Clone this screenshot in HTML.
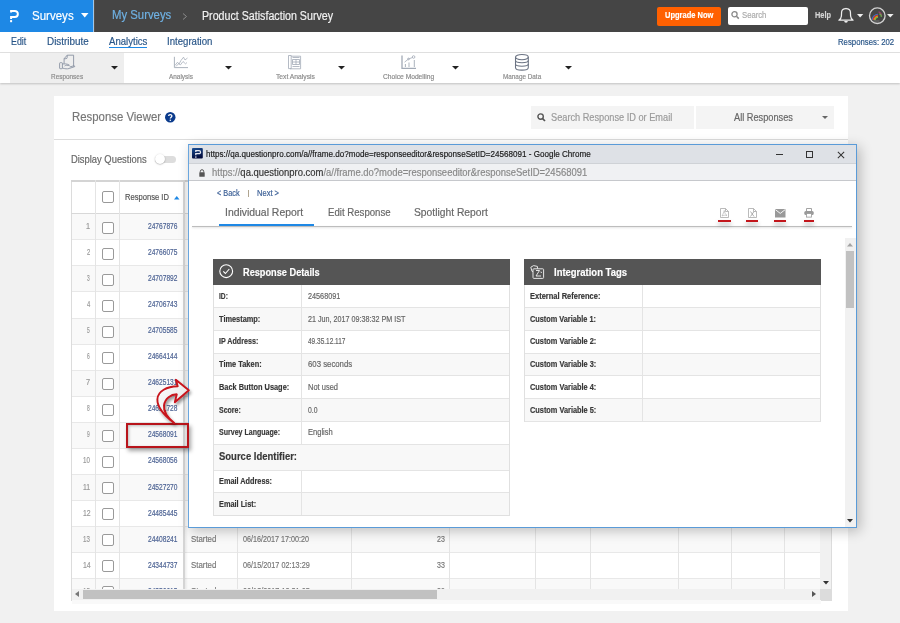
<!DOCTYPE html>
<html><head><meta charset="utf-8">
<style>
*{box-sizing:border-box;margin:0;padding:0}
html,body{width:900px;height:623px;overflow:hidden;background:#f1f1f1;font-family:"Liberation Sans",sans-serif}
.a{position:absolute;white-space:nowrap}
.t{position:absolute;white-space:nowrap;transform-origin:0 0;-webkit-text-stroke:0.18px currentColor}
svg{position:absolute;overflow:visible}
</style></head><body>
<div class="a" style="left:0px;top:0px;width:900px;height:32px;background:#454545"></div>
<div class="a" style="left:0px;top:0px;width:93px;height:32px;background:#1e88e5"></div>
<div class="a" style="left:93px;top:0px;width:1px;height:32px;background:#9cc8ef"></div>
<div class="a" style="left:94px;top:0px;width:1px;height:32px;background:#5a5048"></div>
<svg style="left:9px;top:9px" width="11" height="14" viewBox="0 0 11 14"><path d="M2.1 3.4 V1.9 H5.8 A3.05 3.05 0 0 1 5.8 8 H2.1 V10" fill="none" stroke="#fff" stroke-width="2"/><rect x="1.1" y="11.1" width="2" height="2.1" fill="#fff"/></svg>
<div class="t" id="t0" style="left:32.43px;top:8.18px;font-size:13.5px;line-height:15.079px;color:#fff;font-weight:normal;transform:scaleX(0.8542);">Surveys</div>
<svg style="left:80.8px;top:13px" width="8" height="5"><path d="M0 0H7.5L3.75 4.5Z" fill="#fff"/></svg>
<div class="t" id="t1" style="left:111.77px;top:8.99px;font-size:12.5px;line-height:13.963px;color:#6fb1e3;font-weight:normal;transform:scaleX(0.9077);">My Surveys</div>
<svg style="left:182px;top:13px" width="6" height="7"><path d="M1 0.5L4.5 3.5L1 6.5" fill="none" stroke="#8a8a8a" stroke-width="1"/></svg>
<div class="t" id="t2" style="left:202.47px;top:9.54px;font-size:12px;line-height:13.404px;color:#f2f2f2;font-weight:normal;transform:scaleX(0.8891);">Product Satisfaction Survey</div>
<div class="a" style="left:657px;top:6.5px;width:64px;height:19px;background:#ff6000;border-radius:2px"></div>
<div class="t" id="t3" style="left:664.88px;top:10.40px;font-size:9.5px;line-height:10.611px;color:#fff;font-weight:bold;transform:scaleX(0.7903);">Upgrade Now</div>
<div class="a" style="left:727.5px;top:6.5px;width:80px;height:18.5px;background:#fff;border-radius:2px"></div>
<svg style="left:731px;top:11px" width="9" height="8"><circle cx="3.5" cy="3.3" r="2.6" fill="none" stroke="#888" stroke-width="1.3"/><path d="M5.4 5.2L7.8 7.6" stroke="#888" stroke-width="1.5"/></svg>
<div class="t" id="t4" style="left:741.89px;top:10.40px;font-size:9.5px;line-height:10.611px;color:#aaa;font-weight:normal;transform:scaleX(0.8100);">Search</div>
<div class="t" id="t5" style="left:815.40px;top:10.40px;font-size:9.5px;line-height:10.611px;color:#d4d4d4;font-weight:bold;transform:scaleX(0.7762);">Help</div>
<svg style="left:838px;top:7px" width="16" height="16" viewBox="0 0 16 16"><path d="M0.9 13.2 C2.6 12 3.3 10.8 3.4 9 L3.6 5 C3.8 2.8 5.6 1.6 8 1.6 C10.4 1.6 12.2 2.8 12.4 5 L12.6 9 C12.7 10.8 13.4 12 15.1 13.2 Z" fill="none" stroke="#eee" stroke-width="1.25" stroke-linejoin="round"/><path d="M7.3 1.6 C7.3 0.6 8.7 0.6 8.7 1.6Z" fill="#eee"/><path d="M6.2 14 A1.8 1.8 0 0 0 9.8 14Z" fill="#eee"/></svg>
<svg style="left:856.5px;top:14.4px" width="7" height="4"><path d="M0 0H6.3L3.15 3.4Z" fill="#eee"/></svg>
<svg style="left:868px;top:6.5px" width="19" height="19" viewBox="0 0 19 19"><circle cx="9.3" cy="8.7" r="7.8" fill="none" stroke="#d2d2d2" stroke-width="1.3"/><g fill="none" stroke-width="1.1"><path d="M4.2 13 A5.8 5.8 0 0 1 10 7.2" stroke="#3f6fc8"/><path d="M5.2 13 A4.8 4.8 0 0 1 10 8.2" stroke="#d8362a"/><path d="M6.2 13 A3.8 3.8 0 0 1 10 9.2" stroke="#f08a1c"/><path d="M7.1 13.2 A2.9 2.9 0 0 1 10 10.3" stroke="#7cc540"/><path d="M10.6 4.9 A4 4 0 0 1 13.4 9" stroke="#a33c6a"/><path d="M11.3 6.7 A3 3 0 0 1 13.3 10" stroke="#6ab04c"/></g><path d="M5.5 14 H11.5" stroke="#777" stroke-width="1"/></svg>
<svg style="left:886.7px;top:13.8px" width="7" height="4"><path d="M0 0H6.6L3.3 3.4Z" fill="#eee"/></svg>
<div class="a" style="left:0px;top:32px;width:900px;height:20.8px;background:#fff;border-bottom:1px solid #e2e2e2"></div>
<div class="t" id="t6" style="left:10.84px;top:36.10px;font-size:10.5px;line-height:11.729px;color:#285587;font-weight:normal;transform:scaleX(0.8421);">Edit</div>
<div class="t" id="t7" style="left:47.08px;top:36.10px;font-size:10.5px;line-height:11.729px;color:#285587;font-weight:normal;transform:scaleX(0.9409);">Distribute</div>
<div class="t" id="t8" style="left:109.05px;top:36.10px;font-size:10.5px;line-height:11.729px;color:#285587;font-weight:normal;transform:scaleX(0.9143);">Analytics</div>
<div class="a" style="left:108.8px;top:47px;width:38.5px;height:1.2px;background:#1e88e5"></div>
<div class="t" id="t9" style="left:167.47px;top:36.10px;font-size:10.5px;line-height:11.729px;color:#285587;font-weight:normal;transform:scaleX(0.9160);">Integration</div>
<div class="t" id="t10" style="left:838.10px;top:36.86px;font-size:9px;line-height:10.053px;color:#285587;font-weight:normal;transform:scaleX(0.8635);">Responses: 202</div>
<div class="a" style="left:0px;top:52.5px;width:900px;height:30.5px;background:#fff;box-shadow:0 1px 2px rgba(0,0,0,.2)"></div>
<div class="a" style="left:10px;top:52.5px;width:113.5px;height:30.5px;background:#eeeeee"></div>
<div class="t" id="t11" style="left:50.98px;top:73.01px;font-size:7.5px;line-height:8.377px;color:#8a8a8a;font-weight:normal;transform:scaleX(0.8553);">Responses</div>
<div class="t" id="t12" style="left:168.53px;top:73.01px;font-size:7.5px;line-height:8.377px;color:#8a8a8a;font-weight:normal;transform:scaleX(0.8552);">Analysis</div>
<div class="t" id="t13" style="left:275.56px;top:73.01px;font-size:7.5px;line-height:8.377px;color:#8a8a8a;font-weight:normal;transform:scaleX(0.8977);">Text Analysis</div>
<div class="t" id="t14" style="left:382.55px;top:73.01px;font-size:7.5px;line-height:8.377px;color:#8a8a8a;font-weight:normal;transform:scaleX(0.8898);">Choice Modelling</div>
<div class="t" id="t15" style="left:502.53px;top:73.01px;font-size:7.5px;line-height:8.377px;color:#8a8a8a;font-weight:normal;transform:scaleX(0.8478);">Manage Data</div>
<svg style="left:110.8px;top:66px" width="7" height="4"><path d="M0 0H7L3.5 3.5Z" fill="#222"/></svg>
<svg style="left:224.5px;top:66px" width="7" height="4"><path d="M0 0H7L3.5 3.5Z" fill="#222"/></svg>
<svg style="left:338.0px;top:66px" width="7" height="4"><path d="M0 0H7L3.5 3.5Z" fill="#222"/></svg>
<svg style="left:451.5px;top:66px" width="7" height="4"><path d="M0 0H7L3.5 3.5Z" fill="#222"/></svg>
<svg style="left:565.0px;top:66px" width="7" height="4"><path d="M0 0H7L3.5 3.5Z" fill="#222"/></svg>
<svg style="left:55px;top:52px" width="25" height="20" viewBox="0 0 25 20" fill="none" stroke="#8a93a3" stroke-width="0.9" stroke-linejoin="round"><path d="M9.1 11.6 V6.7 L12.2 3.2 H18.6 V14.6"/><path d="M9.1 6.7 H10.9 A1.3 1.3 0 0 0 12.2 5.4 V3.2"/><rect x="4.6" y="10.7" width="2.8" height="6" rx="0.6"/><path d="M7.4 11.9 H10.6 C12 11.9 13.3 12.5 14.4 13.3 H11.6 C10.8 13.3 10.1 13.6 9.6 14"/><path d="M7.4 16 C10 16.9 12.2 17.1 14.2 16.5 L19.8 14.6 C19.8 13.9 19.1 13.6 18.4 13.9 L14.6 15"/></svg>
<svg style="left:168px;top:52px" width="25" height="20" viewBox="0 0 25 20" fill="none" stroke="#a2aab6" stroke-width="0.75"><path d="M6.4 4.8 V15.6 H20" stroke-width="0.9"/><path d="M7 13.4 L9.5 10.2 L11 12 L13 8.4 L15.5 5.2 L17 8 L19.5 6"/><path d="M8 14.4 L10.5 11.8 L12.5 12.8 L15 9.5 L17.5 11.8 L19 10.5"/></svg>
<svg style="left:282px;top:52px" width="25" height="20" viewBox="0 0 25 20" fill="none" stroke="#a2aab6" stroke-width="0.8"><path d="M6.5 3.5 H9.2 V16.6 H6.5 Z"/><path d="M9.2 4.2 H18.6 V16.8 H8"/><path d="M10.5 5.5 H17.5 M10.5 7.5 H17.5 V12.5 H10.5 Z M14 7.5 V12.5 M10.5 10 H17.5 M10.5 14.5 H17.5"/></svg>
<svg style="left:396px;top:52px" width="25" height="20" viewBox="0 0 25 20" fill="none" stroke="#a2aab6" stroke-width="0.8"><path d="M6 3.5 V16.4 H20" stroke-width="1.3"/><path d="M9.4 12 V15 M13 10.5 V15 M18.3 8 V15" stroke-width="0.9"/><path d="M8.5 10.2 L12.5 7 L16.5 5.5"/><circle cx="17.6" cy="5" r="1.3"/><circle cx="12.5" cy="7" r="0.9"/></svg>
<svg style="left:509px;top:52px" width="25" height="20" viewBox="0 0 25 20" fill="none" stroke="#6b7383" stroke-width="1.05"><ellipse cx="12.9" cy="5.1" rx="6.4" ry="2.6"/><path d="M6.5 5.1 V15.4 C6.5 19 19.3 19 19.3 15.4 V5.1"/><path d="M6.5 8.6 C6.5 11.4 19.3 11.4 19.3 8.6 M6.5 12.1 C6.5 14.9 19.3 14.9 19.3 12.1"/></svg>
<div class="a" style="left:54px;top:96px;width:794px;height:515px;background:#fff"></div>
<div class="t" id="t16" style="left:71.77px;top:111.49px;font-size:12.5px;line-height:13.963px;color:#777;font-weight:normal;transform:scaleX(0.9112);">Response Viewer</div>
<svg style="left:165px;top:111.5px" width="11" height="11" viewBox="0 0 11 11"><circle cx="5.25" cy="5.25" r="5.25" fill="#0b3b8c"/><path d="M3.6 4.1 C3.6 2.2 6.9 2.2 6.9 4 C6.9 5.2 5.3 5.2 5.3 6.6" fill="none" stroke="#fff" stroke-width="1.3"/><circle cx="5.3" cy="8.3" r="0.8" fill="#fff"/></svg>
<div class="a" style="left:530.5px;top:106.3px;width:163px;height:22.5px;background:#f4f4f4"></div>
<svg style="left:537px;top:113px" width="9" height="9"><circle cx="3.6" cy="3.6" r="2.7" fill="none" stroke="#555" stroke-width="1.4"/><path d="M5.6 5.6L8 8" stroke="#555" stroke-width="1.7"/></svg>
<div class="t" id="t17" style="left:550.54px;top:111.95px;font-size:10px;line-height:11.170px;color:#9a9a9a;font-weight:normal;transform:scaleX(0.9205);">Search Response ID or Email</div>
<div class="a" style="left:696px;top:106.3px;width:137.5px;height:22.5px;background:#f4f4f4"></div>
<div class="t" id="t18" style="left:733.50px;top:111.95px;font-size:10px;line-height:11.170px;color:#666;font-weight:normal;transform:scaleX(0.9219);">All Responses</div>
<svg style="left:822px;top:116px" width="6" height="4"><path d="M0 0H6L3 3Z" fill="#666"/></svg>
<div class="a" style="left:54px;top:139.2px;width:794px;height:1px;background:#dcdcdc"></div>
<div class="t" id="t19" style="left:70.90px;top:153.03px;font-size:10.8px;line-height:12.064px;color:#666;font-weight:normal;transform:scaleX(0.8690);">Display Questions</div>
<div class="a" style="left:155px;top:155.7px;width:21px;height:7px;background:#ddd;border-radius:4px"></div>
<div class="a" style="left:154.6px;top:153.8px;width:10.4px;height:10.4px;background:#fff;border-radius:50%;box-shadow:0 0.5px 1.5px rgba(0,0,0,.35)"></div>
<div class="a" style="left:71px;top:180px;width:760.5px;height:420.5px;background:#fff;border:1px solid #dcdcdc"></div>
<div class="a" style="left:71px;top:180px;width:760.5px;height:1.5px;background:#d4d4d4"></div>
<div class="a" style="left:72px;top:214.0px;width:748.5px;height:26.03px;background:#f9f9f9"></div>
<div class="a" style="left:72px;top:240.03px;width:748.5px;height:26.03px;background:#ffffff"></div>
<div class="a" style="left:72px;top:266.06px;width:748.5px;height:26.03px;background:#f9f9f9"></div>
<div class="a" style="left:72px;top:292.09000000000003px;width:748.5px;height:26.03px;background:#ffffff"></div>
<div class="a" style="left:72px;top:318.12px;width:748.5px;height:26.03px;background:#f9f9f9"></div>
<div class="a" style="left:72px;top:344.15px;width:748.5px;height:26.03px;background:#ffffff"></div>
<div class="a" style="left:72px;top:370.18px;width:748.5px;height:26.03px;background:#f9f9f9"></div>
<div class="a" style="left:72px;top:396.21000000000004px;width:748.5px;height:26.03px;background:#ffffff"></div>
<div class="a" style="left:72px;top:422.24px;width:748.5px;height:26.03px;background:#f9f9f9"></div>
<div class="a" style="left:72px;top:448.27px;width:748.5px;height:26.03px;background:#ffffff"></div>
<div class="a" style="left:72px;top:474.3px;width:748.5px;height:26.03px;background:#f9f9f9"></div>
<div class="a" style="left:72px;top:500.33000000000004px;width:748.5px;height:26.03px;background:#ffffff"></div>
<div class="a" style="left:72px;top:526.36px;width:748.5px;height:26.03px;background:#f9f9f9"></div>
<div class="a" style="left:72px;top:552.39px;width:748.5px;height:26.03px;background:#ffffff"></div>
<div class="a" style="left:72px;top:578.4200000000001px;width:748.5px;height:26.03px;background:#f9f9f9"></div>
<div class="a" style="left:72px;top:239.43px;width:748.5px;height:1px;background:#e8e8e8"></div>
<div class="a" style="left:72px;top:265.46px;width:748.5px;height:1px;background:#e8e8e8"></div>
<div class="a" style="left:72px;top:291.49px;width:748.5px;height:1px;background:#e8e8e8"></div>
<div class="a" style="left:72px;top:317.52px;width:748.5px;height:1px;background:#e8e8e8"></div>
<div class="a" style="left:72px;top:343.54999999999995px;width:748.5px;height:1px;background:#e8e8e8"></div>
<div class="a" style="left:72px;top:369.58px;width:748.5px;height:1px;background:#e8e8e8"></div>
<div class="a" style="left:72px;top:395.61px;width:748.5px;height:1px;background:#e8e8e8"></div>
<div class="a" style="left:72px;top:421.64px;width:748.5px;height:1px;background:#e8e8e8"></div>
<div class="a" style="left:72px;top:447.66999999999996px;width:748.5px;height:1px;background:#e8e8e8"></div>
<div class="a" style="left:72px;top:473.7px;width:748.5px;height:1px;background:#e8e8e8"></div>
<div class="a" style="left:72px;top:499.73px;width:748.5px;height:1px;background:#e8e8e8"></div>
<div class="a" style="left:72px;top:525.76px;width:748.5px;height:1px;background:#e8e8e8"></div>
<div class="a" style="left:72px;top:551.79px;width:748.5px;height:1px;background:#e8e8e8"></div>
<div class="a" style="left:72px;top:577.82px;width:748.5px;height:1px;background:#e8e8e8"></div>
<div class="a" style="left:71px;top:212.6px;width:749.5px;height:1.8px;background:#d8d8d8"></div>
<div class="a" style="left:95.0px;top:180px;width:1px;height:409px;background:#e4e4e4"></div>
<div class="a" style="left:118.7px;top:180px;width:1px;height:409px;background:#e4e4e4"></div>
<div class="a" style="left:236.9px;top:180px;width:1px;height:409px;background:#e4e4e4"></div>
<div class="a" style="left:351.0px;top:180px;width:1px;height:409px;background:#e4e4e4"></div>
<div class="a" style="left:449.1px;top:180px;width:1px;height:409px;background:#e4e4e4"></div>
<div class="a" style="left:535.0px;top:180px;width:1px;height:409px;background:#e4e4e4"></div>
<div class="a" style="left:589.7px;top:180px;width:1px;height:409px;background:#e4e4e4"></div>
<div class="a" style="left:678.2px;top:180px;width:1px;height:409px;background:#e4e4e4"></div>
<div class="a" style="left:731.0px;top:180px;width:1px;height:409px;background:#e4e4e4"></div>
<div class="a" style="left:783.9px;top:180px;width:1px;height:409px;background:#e4e4e4"></div>
<div class="a" style="left:183px;top:180px;width:2.2px;height:409px;background:#d4d4d4"></div>
<div class="a" style="left:185.2px;top:180px;width:2.5px;height:409px;background:linear-gradient(90deg,rgba(0,0,0,.07),rgba(0,0,0,0))"></div>
<div class="a" style="left:101.7px;top:191.3px;width:12px;height:12px;border:1px solid #999;border-radius:2px;background:#fff"></div>
<div class="t" id="t20" style="left:125.46px;top:192.06px;font-size:9px;line-height:10.053px;color:#555;font-weight:normal;transform:scaleX(0.8434);">Response ID</div>
<svg style="left:174px;top:195.5px" width="6" height="4"><path d="M0 3.5H5.5L2.75 0Z" fill="#1e88e5"/></svg>
<div class="t" id="t21" style="left:86.45px;top:222.22px;font-size:8.6px;line-height:9.606px;color:#999;font-weight:normal;transform:scaleX(0.8500);">1</div>
<div class="a" style="left:101.7px;top:222.0px;width:12px;height:12px;border:1px solid #9a9a9a;border-radius:2px;background:#fff"></div>
<div class="t" id="t22" style="left:148.44px;top:222.22px;font-size:8.6px;line-height:9.606px;color:#4d6394;font-weight:normal;transform:scaleX(0.7692);">24767876</div>
<div class="t" id="t23" style="left:87.22px;top:248.25px;font-size:8.6px;line-height:9.606px;color:#999;font-weight:normal;transform:scaleX(0.6800);">2</div>
<div class="a" style="left:101.7px;top:248.03px;width:12px;height:12px;border:1px solid #9a9a9a;border-radius:2px;background:#fff"></div>
<div class="t" id="t24" style="left:148.44px;top:248.25px;font-size:8.6px;line-height:9.606px;color:#4d6394;font-weight:normal;transform:scaleX(0.7692);">24766075</div>
<div class="t" id="t25" style="left:87.17px;top:274.28px;font-size:8.6px;line-height:9.606px;color:#999;font-weight:normal;transform:scaleX(0.5667);">3</div>
<div class="a" style="left:101.7px;top:274.06px;width:12px;height:12px;border:1px solid #9a9a9a;border-radius:2px;background:#fff"></div>
<div class="t" id="t26" style="left:148.44px;top:274.28px;font-size:8.6px;line-height:9.606px;color:#4d6394;font-weight:normal;transform:scaleX(0.7692);">24707892</div>
<div class="t" id="t27" style="left:87.22px;top:300.31px;font-size:8.6px;line-height:9.606px;color:#999;font-weight:normal;transform:scaleX(0.6800);">4</div>
<div class="a" style="left:101.7px;top:300.09000000000003px;width:12px;height:12px;border:1px solid #9a9a9a;border-radius:2px;background:#fff"></div>
<div class="t" id="t28" style="left:148.44px;top:300.31px;font-size:8.6px;line-height:9.606px;color:#4d6394;font-weight:normal;transform:scaleX(0.7692);">24706743</div>
<div class="t" id="t29" style="left:87.17px;top:326.34px;font-size:8.6px;line-height:9.606px;color:#999;font-weight:normal;transform:scaleX(0.5667);">5</div>
<div class="a" style="left:101.7px;top:326.12px;width:12px;height:12px;border:1px solid #9a9a9a;border-radius:2px;background:#fff"></div>
<div class="t" id="t30" style="left:148.44px;top:326.34px;font-size:8.6px;line-height:9.606px;color:#4d6394;font-weight:normal;transform:scaleX(0.7692);">24705585</div>
<div class="t" id="t31" style="left:87.17px;top:352.37px;font-size:8.6px;line-height:9.606px;color:#999;font-weight:normal;transform:scaleX(0.5667);">6</div>
<div class="a" style="left:101.7px;top:352.15px;width:12px;height:12px;border:1px solid #9a9a9a;border-radius:2px;background:#fff"></div>
<div class="t" id="t32" style="left:148.44px;top:352.37px;font-size:8.6px;line-height:9.606px;color:#4d6394;font-weight:normal;transform:scaleX(0.7692);">24664144</div>
<div class="t" id="t33" style="left:86.45px;top:378.40px;font-size:8.6px;line-height:9.606px;color:#999;font-weight:normal;transform:scaleX(0.8500);">7</div>
<div class="a" style="left:101.7px;top:378.18px;width:12px;height:12px;border:1px solid #9a9a9a;border-radius:2px;background:#fff"></div>
<div class="t" id="t34" style="left:148.44px;top:378.40px;font-size:8.6px;line-height:9.606px;color:#4d6394;font-weight:normal;transform:scaleX(0.7692);">24625131</div>
<div class="t" id="t35" style="left:87.17px;top:404.43px;font-size:8.6px;line-height:9.606px;color:#999;font-weight:normal;transform:scaleX(0.5667);">8</div>
<div class="a" style="left:101.7px;top:404.21000000000004px;width:12px;height:12px;border:1px solid #9a9a9a;border-radius:2px;background:#fff"></div>
<div class="t" id="t36" style="left:148.44px;top:404.43px;font-size:8.6px;line-height:9.606px;color:#4d6394;font-weight:normal;transform:scaleX(0.7692);">24621728</div>
<div class="t" id="t37" style="left:87.17px;top:430.46px;font-size:8.6px;line-height:9.606px;color:#999;font-weight:normal;transform:scaleX(0.5667);">9</div>
<div class="a" style="left:101.7px;top:430.24px;width:12px;height:12px;border:1px solid #9a9a9a;border-radius:2px;background:#fff"></div>
<div class="t" id="t38" style="left:148.44px;top:430.46px;font-size:8.6px;line-height:9.606px;color:#4d6394;font-weight:normal;transform:scaleX(0.7692);">24568091</div>
<div class="t" id="t39" style="left:82.86px;top:456.49px;font-size:8.6px;line-height:9.606px;color:#999;font-weight:normal;transform:scaleX(0.7200);">10</div>
<div class="a" style="left:101.7px;top:456.27px;width:12px;height:12px;border:1px solid #9a9a9a;border-radius:2px;background:#fff"></div>
<div class="t" id="t40" style="left:148.44px;top:456.49px;font-size:8.6px;line-height:9.606px;color:#4d6394;font-weight:normal;transform:scaleX(0.7692);">24568056</div>
<div class="t" id="t41" style="left:82.84px;top:482.52px;font-size:8.6px;line-height:9.606px;color:#999;font-weight:normal;transform:scaleX(0.8000);">11</div>
<div class="a" style="left:101.7px;top:482.3px;width:12px;height:12px;border:1px solid #9a9a9a;border-radius:2px;background:#fff"></div>
<div class="t" id="t42" style="left:148.44px;top:482.52px;font-size:8.6px;line-height:9.606px;color:#4d6394;font-weight:normal;transform:scaleX(0.7692);">24527270</div>
<div class="t" id="t43" style="left:82.84px;top:508.55px;font-size:8.6px;line-height:9.606px;color:#999;font-weight:normal;transform:scaleX(0.8000);">12</div>
<div class="a" style="left:101.7px;top:508.33000000000004px;width:12px;height:12px;border:1px solid #9a9a9a;border-radius:2px;background:#fff"></div>
<div class="t" id="t44" style="left:148.44px;top:508.55px;font-size:8.6px;line-height:9.606px;color:#4d6394;font-weight:normal;transform:scaleX(0.7692);">24485445</div>
<div class="t" id="t45" style="left:82.86px;top:534.58px;font-size:8.6px;line-height:9.606px;color:#999;font-weight:normal;transform:scaleX(0.7200);">13</div>
<div class="a" style="left:101.7px;top:534.36px;width:12px;height:12px;border:1px solid #9a9a9a;border-radius:2px;background:#fff"></div>
<div class="t" id="t46" style="left:148.44px;top:534.58px;font-size:8.6px;line-height:9.606px;color:#4d6394;font-weight:normal;transform:scaleX(0.7692);">24408241</div>
<div class="t" id="t47" style="left:82.84px;top:560.61px;font-size:8.6px;line-height:9.606px;color:#999;font-weight:normal;transform:scaleX(0.8000);">14</div>
<div class="a" style="left:101.7px;top:560.39px;width:12px;height:12px;border:1px solid #9a9a9a;border-radius:2px;background:#fff"></div>
<div class="t" id="t48" style="left:148.44px;top:560.61px;font-size:8.6px;line-height:9.606px;color:#4d6394;font-weight:normal;transform:scaleX(0.7692);">24344737</div>
<div class="t" id="t49" style="left:82.86px;top:586.64px;font-size:8.6px;line-height:9.606px;color:#999;font-weight:normal;transform:scaleX(0.7200);">15</div>
<div class="a" style="left:101.7px;top:586.4200000000001px;width:12px;height:12px;border:1px solid #9a9a9a;border-radius:2px;background:#fff"></div>
<div class="t" id="t50" style="left:148.44px;top:586.64px;font-size:8.6px;line-height:9.606px;color:#4d6394;font-weight:normal;transform:scaleX(0.7692);">24356615</div>
<div class="t" id="t51" style="left:190.61px;top:535.00px;font-size:8.8px;line-height:9.830px;color:#777;font-weight:normal;transform:scaleX(0.8929);">Started</div>
<div class="t" id="t52" style="left:243.46px;top:535.00px;font-size:8.8px;line-height:9.830px;color:#777;font-weight:normal;transform:scaleX(0.8171);">06/16/2017 17:00:20</div>
<div class="t" id="t53" style="left:436.55px;top:535.00px;font-size:8.8px;line-height:9.830px;color:#777;font-weight:normal;transform:scaleX(0.8000);">23</div>
<div class="t" id="t54" style="left:190.61px;top:561.03px;font-size:8.8px;line-height:9.830px;color:#777;font-weight:normal;transform:scaleX(0.8929);">Started</div>
<div class="t" id="t55" style="left:243.46px;top:561.03px;font-size:8.8px;line-height:9.830px;color:#777;font-weight:normal;transform:scaleX(0.8272);">06/15/2017 02:13:29</div>
<div class="t" id="t56" style="left:436.55px;top:561.03px;font-size:8.8px;line-height:9.830px;color:#777;font-weight:normal;transform:scaleX(0.8000);">33</div>
<div class="t" id="t57" style="left:190.61px;top:587.06px;font-size:8.8px;line-height:9.830px;color:#777;font-weight:normal;transform:scaleX(0.8929);">Started</div>
<div class="t" id="t58" style="left:243.46px;top:587.06px;font-size:8.8px;line-height:9.830px;color:#777;font-weight:normal;transform:scaleX(0.8272);">06/13/2017 12:31:05</div>
<div class="t" id="t59" style="left:436.55px;top:587.06px;font-size:8.8px;line-height:9.830px;color:#777;font-weight:normal;transform:scaleX(0.8000);">29</div>
<div class="a" style="left:72px;top:588.5px;width:758.5px;height:11.5px;background:#f1f1f1"></div>
<svg style="left:75px;top:591px" width="5" height="6"><path d="M4 0V6L0 3Z" fill="#777"/></svg>
<div class="a" style="left:82.7px;top:590px;width:354px;height:8.5px;background:#c1c1c1"></div>
<svg style="left:812px;top:591px" width="5" height="6"><path d="M0 0V6L4 3Z" fill="#555"/></svg>
<div class="a" style="left:820px;top:588.5px;width:11px;height:11.5px;background:#dcdcdc"></div>
<div class="a" style="left:820px;top:214px;width:11px;height:374.5px;background:#f1f1f1"></div>
<svg style="left:822.5px;top:580.5px" width="6" height="4"><path d="M0 0H6L3 3.5Z" fill="#333"/></svg>
<div class="a" style="left:188px;top:144px;width:669px;height:384px;background:#fff;border:1px solid #5a9bd8;border-left:1.6px solid #6aa6de;box-shadow:3px 3px 12px rgba(0,0,0,.24)"></div>
<div class="a" style="left:189px;top:145px;width:667px;height:19px;background:#dee1e6"></div>
<div class="a" style="left:189px;top:162.6px;width:667px;height:18.6px;background:#f0f1f3;border-top:1px solid #cfd2d6;border-bottom:1px solid #c6c8cc"></div>
<svg style="left:192px;top:148.2px" width="11" height="11" viewBox="0 0 11 11"><defs><linearGradient id="pg" x1="0" y1="0" x2="0.3" y2="1"><stop offset="0" stop-color="#1a4f94"/><stop offset="1" stop-color="#020b3c"/></linearGradient></defs><rect width="10.8" height="10.6" rx="1" fill="url(#pg)"/><path d="M3.8 3.9 V2.6 H7 A1.55 1.55 0 0 1 7 5.7 H3.8 V7.3" fill="none" stroke="#e8e8f0" stroke-width="1.3"/><rect x="3.1" y="8.4" width="1.4" height="1.3" fill="#e8e8f0"/></svg>
<div class="t" id="t60" style="left:206.32px;top:150.35px;font-size:8.9px;line-height:9.941px;color:#1a1a1a;font-weight:normal;transform:scaleX(0.9097);">https://qa.questionpro.com/a//frame.do?mode=responseeditor&amp;responseSetID=24568091 - Google Chrome</div>
<div class="a" style="left:776px;top:154.2px;width:7px;height:0.9px;background:#333"></div>
<div class="a" style="left:806.3px;top:151.2px;width:6.8px;height:6.8px;border:0.9px solid #333"></div>
<svg style="left:836.5px;top:151px" width="8" height="8"><path d="M0.500 1.207 L1.207 0.500 L4.000 3.293 L6.793 0.500 L7.500 1.207 L4.707 4.000 L7.500 6.793 L6.793 7.500 L4.000 4.707 L1.207 7.500 L0.500 6.793 L3.293 4.000Z" fill="#333"/></svg>
<svg style="left:199px;top:168.5px" width="6" height="8"><path d="M1.3 3.5V2.4A1.7 1.7 0 0 1 4.7 2.4V3.5" fill="none" stroke="#555" stroke-width="1"/><rect x="0.3" y="3.3" width="5.4" height="4.4" rx="0.5" fill="#555"/></svg>
<div class="t" id="t61" style="left:211.92px;top:167.48px;font-size:10.3px;line-height:11.505px;color:#888;font-weight:normal;transform:scaleX(0.9179);">https://<span style="color:#333">qa.questionpro.com</span>/a//frame.do?mode=responseeditor&amp;responseSetID=24568091</div>
<div class="t" id="t62" style="left:217.47px;top:188.84px;font-size:8.8px;line-height:9.830px;color:#3b5f96;font-weight:normal;transform:scaleX(0.8321);">&lt; Back</div>
<div class="a" style="left:248px;top:189.5px;width:0.9px;height:7px;background:#b0a590"></div>
<div class="t" id="t63" style="left:256.92px;top:188.84px;font-size:8.8px;line-height:9.830px;color:#3b5f96;font-weight:normal;transform:scaleX(0.8577);">Next &gt;</div>
<div class="t" id="t64" style="left:225.47px;top:206.70px;font-size:10.5px;line-height:11.729px;color:#666;font-weight:normal;transform:scaleX(0.9911);">Individual Report</div>
<div class="t" id="t65" style="left:328.06px;top:206.70px;font-size:10.5px;line-height:11.729px;color:#666;font-weight:normal;transform:scaleX(0.9174);">Edit Response</div>
<div class="t" id="t66" style="left:414.28px;top:206.70px;font-size:10.5px;line-height:11.729px;color:#666;font-weight:normal;transform:scaleX(0.9803);">Spotlight Report</div>
<div class="a" style="left:192px;top:225.6px;width:660px;height:1.5px;background:#bdbdbd;box-shadow:0 1px 2px rgba(0,0,0,.15)"></div>
<div class="a" style="left:218.7px;top:224.3px;width:95px;height:2px;background:#1e88e5"></div>
<div class="a" style="left:718px;top:220px;width:12.799999999999955px;height:1.8px;background:#c3161c;box-shadow:0 3px 4px rgba(0,0,0,.35)"></div>
<div class="a" style="left:746.2px;top:220px;width:11.599999999999909px;height:1.8px;background:#c3161c;box-shadow:0 3px 4px rgba(0,0,0,.35)"></div>
<div class="a" style="left:774px;top:220px;width:12px;height:1.8px;background:#c3161c;box-shadow:0 3px 4px rgba(0,0,0,.35)"></div>
<div class="a" style="left:804.3px;top:220px;width:9.800000000000068px;height:1.8px;background:#c3161c;box-shadow:0 3px 4px rgba(0,0,0,.35)"></div>
<svg style="left:720px;top:208px" width="9" height="10" viewBox="0 0 9 10" fill="none" stroke="#aaa" stroke-width="0.8"><path d="M0.5 0.5H5.5L8.5 3.5V9.5H0.5Z"/><path d="M5.5 0.5V3.5H8.5"/><path d="M2 8 C3 6 4 4 4.2 2.5 C4.5 4.5 5.5 6.5 7 7.5 C5 7 3.5 7.2 2 8Z" stroke="#aaa" stroke-width="0.6"/></svg>
<svg style="left:747.5px;top:208px" width="9" height="10" viewBox="0 0 9 10" fill="none" stroke="#aaa" stroke-width="0.8"><path d="M0.5 0.5H5.5L8.5 3.5V9.5H0.5Z"/><path d="M5.5 0.5V3.5H8.5"/><path d="M2.5 3.5L6 8.5M6 3.5L2.5 8.5" stroke="#999"/></svg>
<svg style="left:775px;top:209px" width="10.5" height="8.5" viewBox="0 0 10.5 8.5"><path d="M0 0H10.5V8.5H0Z" fill="#999"/><path d="M0.3 0.6L5.25 4.4L10.2 0.6" fill="none" stroke="#fff" stroke-width="0.9"/></svg>
<svg style="left:803.8px;top:208.3px" width="10" height="9.5" viewBox="0 0 10 9.5"><path d="M2.5 3V0.5H7.5V3" fill="none" stroke="#999" stroke-width="0.9"/><rect x="0.3" y="3" width="9.4" height="4" rx="1.5" fill="#999"/><rect x="2.5" y="5.6" width="5" height="3.5" fill="#fff" stroke="#999" stroke-width="0.8"/></svg>
<div class="a" style="left:845px;top:238px;width:10.5px;height:289px;background:#f1f1f1"></div>
<svg style="left:847px;top:243px" width="6" height="4"><path d="M0 3.5H6L3 0Z" fill="#a3a3a3"/></svg>
<div class="a" style="left:845.8px;top:251px;width:8.5px;height:57px;background:#c1c1c1"></div>
<svg style="left:847px;top:519px" width="6" height="4"><path d="M0 0H6L3 3.5Z" fill="#333"/></svg>
<div class="a" style="left:212.5px;top:259.3px;width:297.5px;height:26px;background:#555"></div>
<svg style="left:218.5px;top:264.2px" width="15" height="15" viewBox="0 0 15 15"><circle cx="7.2" cy="7.2" r="6.4" fill="none" stroke="#fff" stroke-width="1.1"/><path d="M4.3 7.3L6.4 9.5L10.3 5" fill="none" stroke="#fff" stroke-width="1.1"/></svg>
<div class="t" id="t67" style="left:243.39px;top:266.23px;font-size:10.8px;line-height:12.064px;color:#fff;font-weight:bold;transform:scaleX(0.8516);">Response Details</div>
<div class="a" style="left:212.5px;top:285.3px;width:297.5px;height:230px;background:#fff;border:1px solid #e0e0e0;border-top:0"></div>
<div class="a" style="left:213.5px;top:285.3px;width:295.5px;height:22.75px;background:#ffffff;border-bottom:1px solid #e4e4e4"></div>
<div class="a" style="left:213.5px;top:308.05px;width:295.5px;height:22.75px;background:#f8f8f8;border-bottom:1px solid #e4e4e4"></div>
<div class="a" style="left:213.5px;top:330.8px;width:295.5px;height:22.75px;background:#ffffff;border-bottom:1px solid #e4e4e4"></div>
<div class="a" style="left:213.5px;top:353.55px;width:295.5px;height:22.75px;background:#f8f8f8;border-bottom:1px solid #e4e4e4"></div>
<div class="a" style="left:213.5px;top:376.3px;width:295.5px;height:22.75px;background:#ffffff;border-bottom:1px solid #e4e4e4"></div>
<div class="a" style="left:213.5px;top:399.05px;width:295.5px;height:22.75px;background:#f8f8f8;border-bottom:1px solid #e4e4e4"></div>
<div class="a" style="left:213.5px;top:421.8px;width:295.5px;height:22.75px;background:#ffffff;border-bottom:1px solid #e4e4e4"></div>
<div class="a" style="left:213.5px;top:444.55px;width:295.5px;height:26px;background:#f8f8f8;border-bottom:1px solid #e4e4e4"></div>
<div class="a" style="left:213.5px;top:470.55px;width:295.5px;height:22.7px;background:#fff;border-bottom:1px solid #e4e4e4"></div>
<div class="a" style="left:213.5px;top:493.25px;width:295.5px;height:22.3px;background:#f8f8f8"></div>
<div class="a" style="left:301px;top:285.3px;width:1px;height:159.25px;background:#e4e4e4"></div>
<div class="a" style="left:301px;top:470.55px;width:1px;height:45px;background:#e4e4e4"></div>
<div class="a" style="left:212.5px;top:515px;width:297.5px;height:1px;background:#e0e0e0"></div>
<div class="t" id="t68" style="left:219.26px;top:291.82px;font-size:8.6px;line-height:9.606px;color:#383838;font-weight:bold;transform:scaleX(0.7750);">ID:</div>
<div class="t" id="t69" style="left:308.11px;top:291.82px;font-size:8.6px;line-height:9.606px;color:#666;font-weight:normal;transform:scaleX(0.8436);">24568091</div>
<div class="t" id="t70" style="left:219.30px;top:314.57px;font-size:8.6px;line-height:9.606px;color:#383838;font-weight:bold;transform:scaleX(0.8592);">Timestamp:</div>
<div class="t" id="t71" style="left:308.11px;top:314.57px;font-size:8.6px;line-height:9.606px;color:#666;font-weight:normal;transform:scaleX(0.8359);">21 Jun, 2017 09:38:32 PM IST</div>
<div class="t" id="t72" style="left:219.29px;top:337.32px;font-size:8.6px;line-height:9.606px;color:#383838;font-weight:bold;transform:scaleX(0.8313);">IP Address:</div>
<div class="t" id="t73" style="left:308.08px;top:337.32px;font-size:8.6px;line-height:9.606px;color:#666;font-weight:normal;transform:scaleX(0.7560);">49.35.12.117</div>
<div class="t" id="t74" style="left:219.31px;top:360.07px;font-size:8.6px;line-height:9.606px;color:#383838;font-weight:bold;transform:scaleX(0.8640);">Time Taken:</div>
<div class="t" id="t75" style="left:308.14px;top:360.07px;font-size:8.6px;line-height:9.606px;color:#666;font-weight:normal;transform:scaleX(0.9061);">603 seconds</div>
<div class="t" id="t76" style="left:219.30px;top:382.82px;font-size:8.6px;line-height:9.606px;color:#383838;font-weight:bold;transform:scaleX(0.8598);">Back Button Usage:</div>
<div class="t" id="t77" style="left:308.12px;top:382.82px;font-size:8.6px;line-height:9.606px;color:#666;font-weight:normal;transform:scaleX(0.8714);">Not used</div>
<div class="t" id="t78" style="left:219.28px;top:405.57px;font-size:8.6px;line-height:9.606px;color:#383838;font-weight:bold;transform:scaleX(0.8148);">Score:</div>
<div class="t" id="t79" style="left:308.09px;top:405.57px;font-size:8.6px;line-height:9.606px;color:#666;font-weight:normal;transform:scaleX(0.7923);">0.0</div>
<div class="t" id="t80" style="left:219.29px;top:428.32px;font-size:8.6px;line-height:9.606px;color:#383838;font-weight:bold;transform:scaleX(0.8200);">Survey Language:</div>
<div class="t" id="t81" style="left:308.13px;top:428.32px;font-size:8.6px;line-height:9.606px;color:#666;font-weight:normal;transform:scaleX(0.8793);">English</div>
<div class="t" id="t82" style="left:219.24px;top:451.05px;font-size:10.5px;line-height:11.729px;color:#383838;font-weight:bold;transform:scaleX(0.9034);">Source Identifier:</div>
<div class="t" id="t83" style="left:219.30px;top:477.07px;font-size:8.6px;line-height:9.606px;color:#383838;font-weight:bold;transform:scaleX(0.8508);">Email Address:</div>
<div class="t" id="t84" style="left:219.30px;top:499.77px;font-size:8.6px;line-height:9.606px;color:#383838;font-weight:bold;transform:scaleX(0.8545);">Email List:</div>
<div class="a" style="left:523.5px;top:259.3px;width:297.5px;height:26px;background:#555"></div>
<svg style="left:530px;top:264.5px" width="15" height="14" viewBox="0 0 15 14" fill="none" stroke="#e6e6e6" stroke-width="1"><path d="M0.8 2.2 L3.6 0.6 L7.4 1.4 L7.6 4.4 L4.6 6.6 L2 6.4 Z" fill="#555"/><rect x="3" y="3.8" width="10.6" height="9.6" rx="0.8" fill="#555"/><path d="M6 5.5 L9.5 5.5 L6 11 L11 11 M10.5 7 L12 7.5"/></svg>
<div class="t" id="t85" style="left:553.84px;top:266.23px;font-size:10.8px;line-height:12.064px;color:#fff;font-weight:bold;transform:scaleX(0.8771);">Integration Tags</div>
<div class="a" style="left:523.5px;top:285.3px;width:297.5px;height:137.0px;background:#fff;border:1px solid #e0e0e0;border-top:0"></div>
<div class="a" style="left:524.5px;top:285.3px;width:295.5px;height:22.75px;background:#ffffff;border-bottom:1px solid #e4e4e4"></div>
<div class="t" id="t86" style="left:530.12px;top:291.82px;font-size:8.6px;line-height:9.606px;color:#383838;font-weight:bold;transform:scaleX(0.8728);">External Reference:</div>
<div class="a" style="left:524.5px;top:308.05px;width:295.5px;height:22.75px;background:#f8f8f8;border-bottom:1px solid #e4e4e4"></div>
<div class="t" id="t87" style="left:530.12px;top:314.57px;font-size:8.6px;line-height:9.606px;color:#383838;font-weight:bold;transform:scaleX(0.8526);">Custom Variable 1:</div>
<div class="a" style="left:524.5px;top:330.8px;width:295.5px;height:22.75px;background:#ffffff;border-bottom:1px solid #e4e4e4"></div>
<div class="t" id="t88" style="left:530.12px;top:337.32px;font-size:8.6px;line-height:9.606px;color:#383838;font-weight:bold;transform:scaleX(0.8564);">Custom Variable 2:</div>
<div class="a" style="left:524.5px;top:353.55px;width:295.5px;height:22.75px;background:#f8f8f8;border-bottom:1px solid #e4e4e4"></div>
<div class="t" id="t89" style="left:530.12px;top:360.07px;font-size:8.6px;line-height:9.606px;color:#383838;font-weight:bold;transform:scaleX(0.8564);">Custom Variable 3:</div>
<div class="a" style="left:524.5px;top:376.3px;width:295.5px;height:22.75px;background:#ffffff;border-bottom:1px solid #e4e4e4"></div>
<div class="t" id="t90" style="left:530.12px;top:382.82px;font-size:8.6px;line-height:9.606px;color:#383838;font-weight:bold;transform:scaleX(0.8564);">Custom Variable 4:</div>
<div class="a" style="left:524.5px;top:399.05px;width:295.5px;height:22.75px;background:#f8f8f8;border-bottom:1px solid #e4e4e4"></div>
<div class="t" id="t91" style="left:530.12px;top:405.57px;font-size:8.6px;line-height:9.606px;color:#383838;font-weight:bold;transform:scaleX(0.8564);">Custom Variable 5:</div>
<div class="a" style="left:642.3px;top:285.3px;width:1px;height:136.5px;background:#e4e4e4"></div>
<div class="a" style="left:125.5px;top:423px;width:63px;height:25px;border:2.4px solid #b8141b;box-shadow:2px 3px 4px rgba(0,0,0,.35), inset 1px 1px 3px rgba(0,0,0,.25)"></div>
<svg style="left:145px;top:370px" width="50" height="55" viewBox="0 0 50 55"><defs><filter id="sh" x="-40%" y="-40%" width="180%" height="180%"><feDropShadow dx="1.5" dy="2.5" stdDeviation="1.8" flood-color="#000" flood-opacity="0.4"/></filter><linearGradient id="ag" x1="0" y1="0" x2="1" y2="1"><stop offset="0" stop-color="#fff"/><stop offset="1" stop-color="#ddd"/></linearGradient></defs><path d="M29.2 53 C20 46 12 38 12.4 29.2 C12.8 21 22 16.5 32.7 16.3 L30.8 9.8 L43.8 20.3 L29.8 32.2 L31.8 24.3 C26 24.5 20 28 19 35.3 C18.3 41 22 47 29.2 53 Z" fill="url(#ag)" stroke="#c8121b" stroke-width="1.9" stroke-linejoin="round" filter="url(#sh)"/></svg>
</body></html>
